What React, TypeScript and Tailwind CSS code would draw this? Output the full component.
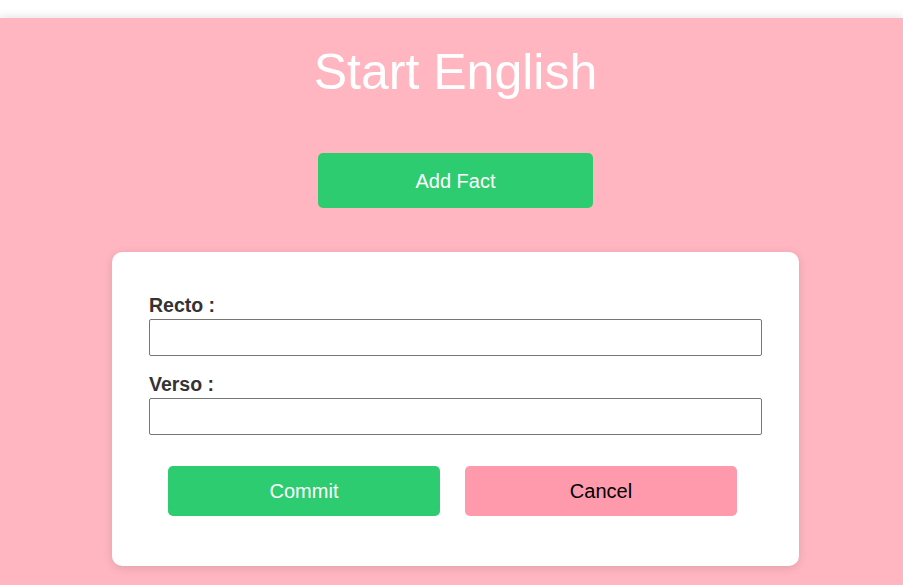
import React from 'react';

const App: React.FC = () => {
  return (
    <div className="min-h-screen bg-white font-['Liberation_Sans',Arial,sans-serif]">
      <div className="h-[18px] bg-white" />

      <main className="relative min-h-[567px] bg-[#ffb6c1] shadow-[0_-2px_8px_rgba(0,0,0,0.1)] flex flex-col items-center pl-[8px]">
        <h1 className="mt-[26px] text-[50px] leading-[57px] text-white">Start English</h1>

        <button className="mt-[52px] w-[275px] h-[55px] rounded-[5px] bg-[#2ecc71] text-white text-[20px]">
          Add Fact
        </button>

        {/* Form card */}
        <div className="mt-[44px] w-[687px] bg-white rounded-[10px] shadow-[0_2px_10px_rgba(0,0,0,0.12)] px-[37px] pt-[42px] pb-[50px]">
          <label className="block text-[19.5px] leading-[22px] font-bold text-[#333]">Recto :</label>
          <input className="mt-[3px] block w-full h-[37px] border border-[#767676] rounded-[2px] bg-white" />

          <label className="block mt-[17px] text-[19.5px] leading-[22px] font-bold text-[#333]">Verso :</label>
          <input className="mt-[3px] block w-full h-[37px] border border-[#767676] rounded-[2px] bg-white" />

          <div className="mt-[31px] flex gap-[25px] pl-[19px]">
            <button className="w-[272px] h-[50px] rounded-[5px] bg-[#2ecc71] text-white text-[20px]">Commit</button>
            <button className="w-[272px] h-[50px] rounded-[5px] bg-[#ff99ac] text-black text-[20px]">Cancel</button>
          </div>
        </div>
      </main>
    </div>
  );
};

export default App;
